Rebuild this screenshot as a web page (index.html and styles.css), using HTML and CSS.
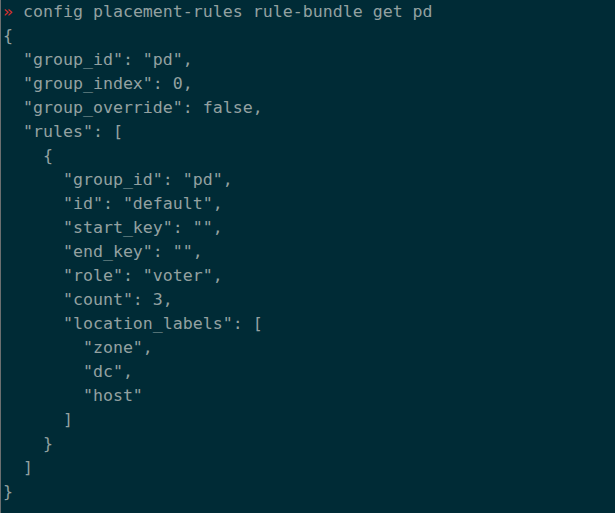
FILE: index.html
```html
<!DOCTYPE html>
<html>
<head>
<meta charset="utf-8">
<link rel="stylesheet" href="styles.css">
</head>
<body>
<div class="term">
<pre class="out"><span class="prompt">»</span> config placement-rules rule-bundle get pd
{
  "group_id": "pd",
  "group_index": 0,
  "group_override": false,
  "rules": [
    {
      "group_id": "pd",
      "id": "default",
      "start_key": "",
      "end_key": "",
      "role": "voter",
      "count": 3,
      "location_labels": [
        "zone",
        "dc",
        "host"
      ]
    }
  ]
}</pre>
</div>
</body>
</html>
```
FILE: styles.css
```css
html, body {
  margin: 0;
  padding: 0;
  height: 100%;
  background: #002b36;
}
.term {
  box-sizing: border-box;
  height: 100%;
  border-left: 1px solid #6b6f70;
  background: #002b36;
  padding: 0 0 0 2px;
}
.out {
  margin: 0;
  font-family: "DejaVu Sans Mono", monospace;
  font-size: 16.6px;
  line-height: 24px;
  color: #93a1a1;
}
.prompt {
  color: #dc322f;
}
```
